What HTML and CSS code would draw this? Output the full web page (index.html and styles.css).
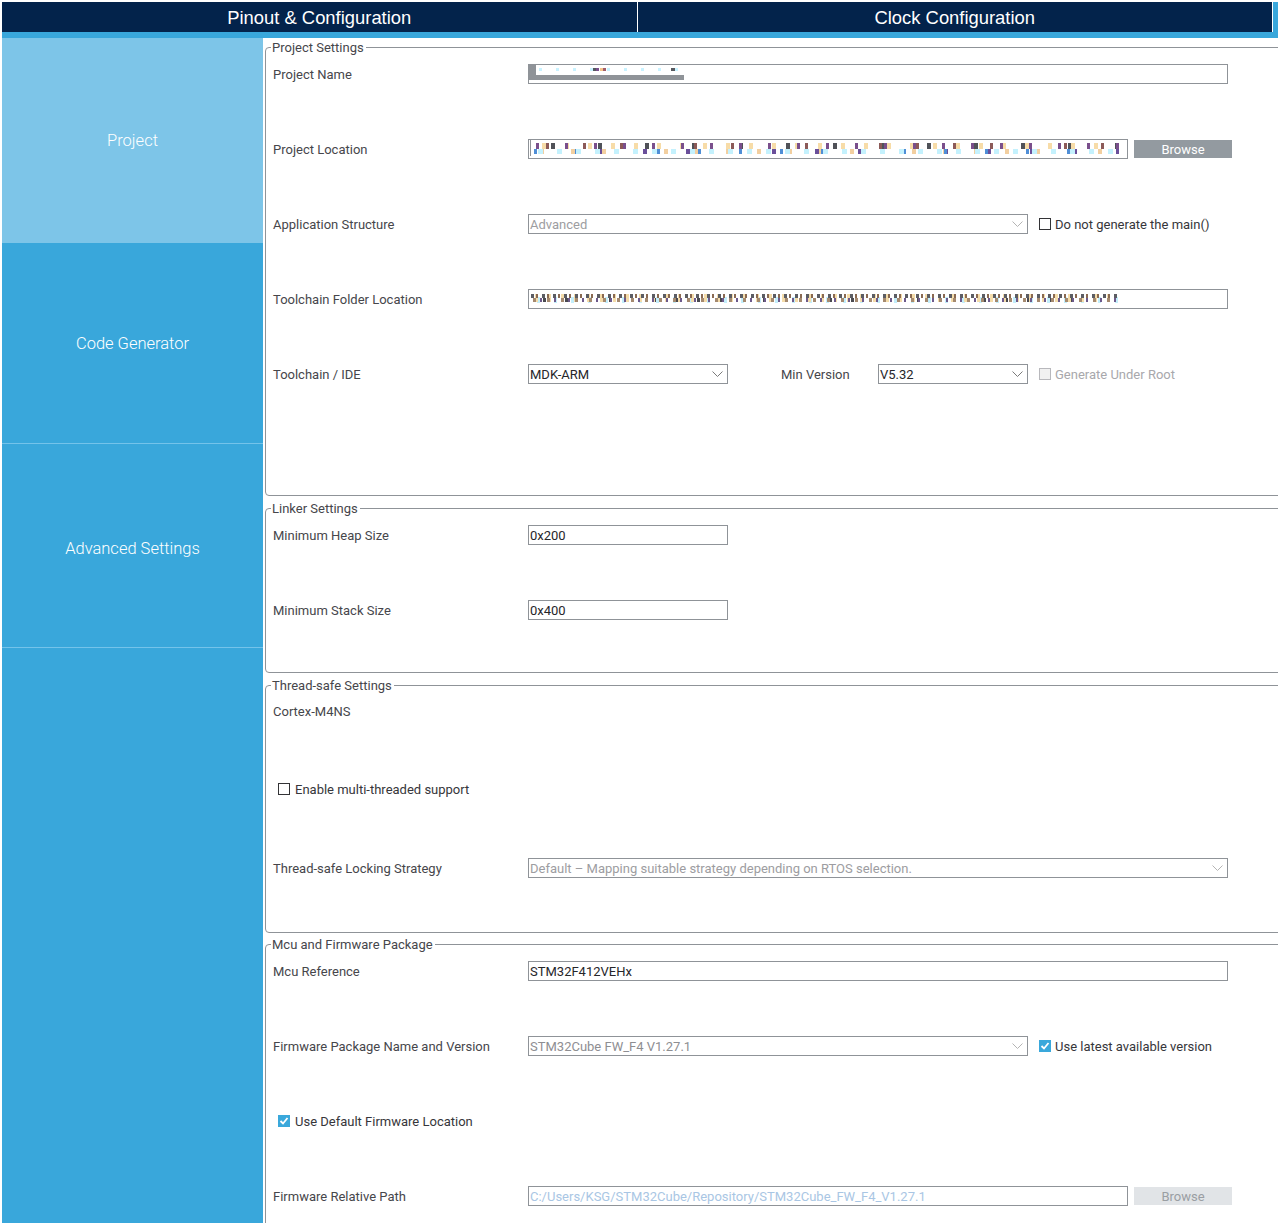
FILE: index.html
```html
<!DOCTYPE html>
<html lang="en">
<head>
<meta charset="utf-8">
<title>Project Manager</title>
<link rel="stylesheet" href="styles.css">
</head>
<body>
<div class="app">
  <header class="topbar">
    <div class="tab">Pinout &amp; Configuration</div>
    <div class="tab">Clock Configuration</div>
  </header>
  <div class="main">
    <nav class="sidebar">
      <div class="nav-item active nav-project">Project</div>
      <div class="nav-item nav-code">Code Generator</div>
      <div class="nav-item nav-adv">Advanced Settings</div>
    </nav>
    <div class="content">
      <fieldset class="group g-project">
        <legend>Project Settings</legend>
        <div class="row">
          <div class="lbl">Project Name</div>
          <div class="field w700 redacted-name"><span class="rname"></span></div>
        </div>
        <div class="row">
          <div class="lbl">Project Location</div>
          <div class="field w600"><span class="caret"></span><span class="noise noise-a"></span></div>
          <div class="btn">Browse</div>
        </div>
        <div class="row">
          <div class="lbl">Application Structure</div>
          <div class="field select w500 disabled">Advanced
            <svg class="chev" width="11" height="6" viewBox="0 0 11 6"><polyline points="0.5,0.5 5.5,5.5 10.5,0.5" fill="none" stroke="#b4b4b4" stroke-width="1"/></svg>
          </div>
          <div class="check"><span class="box"></span><span>Do not generate the main()</span></div>
        </div>
        <div class="row">
          <div class="lbl">Toolchain Folder Location</div>
          <div class="field w700"><span class="noise noise-b"></span></div>
        </div>
        <div class="row">
          <div class="lbl">Toolchain / IDE</div>
          <div class="field select w200">MDK-ARM
            <svg class="chev" width="11" height="6" viewBox="0 0 11 6"><polyline points="0.5,0.5 5.5,5.5 10.5,0.5" fill="none" stroke="#7a7a7a" stroke-width="1"/></svg>
          </div>
          <div class="minlbl">Min Version</div>
          <div class="field select w150">V5.32
            <svg class="chev" width="11" height="6" viewBox="0 0 11 6"><polyline points="0.5,0.5 5.5,5.5 10.5,0.5" fill="none" stroke="#7a7a7a" stroke-width="1"/></svg>
          </div>
          <div class="check off"><span class="box"></span><span>Generate Under Root</span></div>
        </div>
      </fieldset>

      <fieldset class="group g-linker">
        <legend>Linker Settings</legend>
        <div class="row">
          <div class="lbl">Minimum Heap Size</div>
          <div class="field w200">0x200</div>
        </div>
        <div class="row">
          <div class="lbl">Minimum Stack Size</div>
          <div class="field w200">0x400</div>
        </div>
      </fieldset>

      <fieldset class="group g-thread">
        <legend>Thread-safe Settings</legend>
        <div class="row row-core">
          <div class="lbl">Cortex-M4NS</div>
        </div>
        <div class="row row-multi">
          <div class="check indent"><span class="box"></span><span>Enable multi-threaded support</span></div>
        </div>
        <div class="row">
          <div class="lbl">Thread-safe Locking Strategy</div>
          <div class="field select w700 disabled">Default – Mapping suitable strategy depending on RTOS selection.
            <svg class="chev" width="11" height="6" viewBox="0 0 11 6"><polyline points="0.5,0.5 5.5,5.5 10.5,0.5" fill="none" stroke="#b4b4b4" stroke-width="1"/></svg>
          </div>
        </div>
      </fieldset>

      <fieldset class="group g-mcu">
        <legend>Mcu and Firmware Package</legend>
        <div class="row">
          <div class="lbl">Mcu Reference</div>
          <div class="field w700">STM32F412VEHx</div>
        </div>
        <div class="row">
          <div class="lbl">Firmware Package Name and Version</div>
          <div class="field select w500 disabled dim">STM32Cube FW_F4 V1.27.1
            <svg class="chev" width="11" height="6" viewBox="0 0 11 6"><polyline points="0.5,0.5 5.5,5.5 10.5,0.5" fill="none" stroke="#b4b4b4" stroke-width="1"/></svg>
          </div>
          <div class="check on"><span class="box"><svg width="12" height="12" viewBox="0 0 12 12"><polyline points="2.5,6 5,8.5 9.5,3" fill="none" stroke="#fff" stroke-width="1.8"/></svg></span><span>Use latest available version</span></div>
        </div>
        <div class="row">
          <div class="check on indent"><span class="box"><svg width="12" height="12" viewBox="0 0 12 12"><polyline points="2.5,6 5,8.5 9.5,3" fill="none" stroke="#fff" stroke-width="1.8"/></svg></span><span>Use Default Firmware Location</span></div>
        </div>
        <div class="row">
          <div class="lbl">Firmware Relative Path</div>
          <div class="field w600 path">C:/Users/KSG/STM32Cube/Repository/STM32Cube_FW_F4_V1.27.1</div>
          <div class="btn btn-off">Browse</div>
        </div>
      </fieldset>
    </div>
  </div>
</div>
</body>
</html>
```

FILE: styles.css
```css
html, body {
  margin: 0;
  padding: 0;
  background: #ffffff;
  overflow: hidden;
}

.app {
  width: 1278px;
  height: 1223px;
  box-sizing: border-box;
  padding: 2px 0 0 2px;
  display: flex;
  flex-direction: column;
  font-family: Roboto, "Liberation Sans", Arial, sans-serif;
  font-size: 13px;
  color: #46464b;
}

/* ---------- top bar ---------- */
.topbar {
  display: flex;
  flex: none;
  background: #39a7db;
  padding: 0 5px 6px 0;
}

.tab {
  flex: 1;
  height: 30px;
  line-height: 31px;
  background: #03234b;
  border-right: 1px solid #ffffff;
  color: #ffffff;
  text-align: center;
  font-family: "Liberation Sans", Arial, sans-serif;
  font-size: 18.4px;
}

/* ---------- main ---------- */
.main {
  flex: 1;
  display: flex;
  min-height: 0;
}

.sidebar {
  width: 261px;
  flex: none;
  background: #39a7db;
  display: flex;
  flex-direction: column;
}

.nav-item {
  display: flex;
  align-items: center;
  justify-content: center;
  color: #ffffff;
  font-size: 16.5px;
  font-weight: 300;
}

.nav-project {
  height: 205px;
  background: #7dc5e8;
}

.nav-code {
  height: 200px;
  border-bottom: 1px solid #74c3ea;
}

.nav-adv {
  height: 198px;
  padding-top: 5px;
  border-bottom: 1px solid #74c3ea;
}

.content {
  flex: 1;
  min-width: 0;
  padding-left: 2px;
  overflow: hidden;
}

/* ---------- groups ---------- */
.group {
  margin: 3px -30px 0 0;
  min-width: 0;
  border: 1px solid #8f9398;
  border-radius: 4px;
  padding: 8px 7px 0 7px;
}

.group legend {
  padding: 2px 2px 0 1px;
  margin-left: -2px;
  line-height: 16px;
  font-size: 13px;
  color: #46464b;
}

.g-project { margin-top: 0; padding-bottom: 111px; }
.g-linker { padding-bottom: 52px; }
.g-thread { padding-bottom: 54px; }
.g-mcu { margin-top: 2px; padding-bottom: 40px; }

.row {
  display: flex;
  align-items: center;
  height: 20px;
  margin-bottom: 55px;
}

.row:last-child { margin-bottom: 0; }

.row-core { height: 18px; margin-bottom: 59px; }
.row-multi { margin-bottom: 59px; }

.lbl {
  width: 255px;
  flex: none;
  white-space: nowrap;
}

/* ---------- fields ---------- */
.field {
  position: relative;
  box-sizing: border-box;
  height: 20px;
  line-height: 19px;
  border: 1px solid #8f9398;
  padding-left: 1px;
  color: #26262a;
  background: #ffffff;
  white-space: nowrap;
  overflow: hidden;
  flex: none;
}

.w700 { width: 700px; }
.w600 { width: 600px; }
.w500 { width: 500px; }
.w200 { width: 200px; }
.w150 { width: 150px; }

.field.disabled { color: #9d9da1; }
.field.dim { color: #8e8e92; }
.field.path { color: #a9c6e4; }

.chev {
  position: absolute;
  right: 4px;
  top: 6px;
}

.minlbl {
  width: 97px;
  flex: none;
  margin-left: 53px;
}

.btn {
  flex: none;
  width: 98px;
  height: 18px;
  line-height: 19px;
  margin-left: 6px;
  background: #939aa0;
  color: #ffffff;
  text-align: center;
}

.btn-off {
  background: #e1e4e7;
  color: #9a9ea3;
}

/* ---------- checkboxes ---------- */
.check {
  display: flex;
  align-items: center;
  margin-left: 11px;
  gap: 4px;
  white-space: nowrap;
  color: #36363a;
}

.check.indent { margin-left: 5px; gap: 5px; }

.check .box {
  width: 12px;
  height: 12px;
  box-sizing: border-box;
  border: 1px solid #333336;
  background: #ffffff;
  display: inline-flex;
  flex: none;
}

.check.off { color: #a8a8ac; }
.check.off .box { border-color: #b8b8bc; background: #f1f1f1; }

.check.on .box {
  border: none;
  background: #3aa8db;
}

/* ---------- redacted (pixelated) values ---------- */
.redacted-name { padding: 0; }

.rname {
  position: absolute;
  left: -1px;
  top: -1px;
  width: 156px;
  height: 16px;
  box-sizing: border-box;
  border-left: 8px solid #8f9398;
  border-bottom: 5px solid #8f9398;
  border-top: 1px solid #8f9398;
  background:
    repeating-linear-gradient(90deg, transparent 0 3px, #c9f2ff 3px 6px, transparent 6px 17px) 0 3px / 100% 3px no-repeat,
    repeating-linear-gradient(90deg, transparent 0 56px, #56585e 56px 60px, #7a4f8c 60px 63px, transparent 63px 79px) 0 3px / 100% 3px no-repeat,
    repeating-linear-gradient(90deg, transparent 0 64px, #f4c48c 64px 67px, #a15d6a 67px 70px, transparent 70px 88px) 0 3px / 100% 3px no-repeat,
    #ffffff;
}

.caret {
  display: inline-block;
  width: 1px;
  height: 16px;
  background: #8f9398;
  vertical-align: top;
}

.noise {
  display: inline-block;
  height: 12px;
  margin-top: 3px;
  vertical-align: top;
}

.noise-a {
  width: 588px;
  background:
    repeating-linear-gradient(90deg, transparent 0 5px, #7a4f8c 5px 8px, transparent 8px 29px) 0 0 / 100% 6px no-repeat,
    repeating-linear-gradient(90deg, transparent 0 11px, #f7dca8 11px 15px, transparent 15px 23px) 0 0 / 100% 6px no-repeat,
    repeating-linear-gradient(90deg, transparent 0 7px, #c4f1fd 7px 12px, transparent 12px 19px) 0 6px / 100% 5px no-repeat,
    repeating-linear-gradient(90deg, transparent 0 15px, #8c5a58 15px 18px, transparent 18px 37px) 0 0 / 100% 6px no-repeat,
    repeating-linear-gradient(90deg, transparent 0 3px, #4f8ed6 3px 6px, transparent 6px 41px) 0 6px / 100% 5px no-repeat,
    repeating-linear-gradient(90deg, transparent 0 20px, #505258 20px 24px, transparent 24px 47px) 0 0 / 100% 6px no-repeat,
    repeating-linear-gradient(90deg, transparent 0 9px, #f2cfa0 9px 13px, transparent 13px 31px) 0 6px / 100% 5px no-repeat,
    repeating-linear-gradient(90deg, transparent 0 26px, #6a4f9a 26px 30px, transparent 30px 43px) 0 6px / 100% 5px no-repeat;
}

.noise-b {
  width: 588px;
  margin-left: 1px;
  background:
    repeating-linear-gradient(90deg, #5c5d63 0 3px, transparent 3px 5px, #8a6a52 5px 7px, transparent 7px 11px) 0 1px / 100% 4px no-repeat,
    repeating-linear-gradient(90deg, transparent 0 2px, #a58a70 2px 5px, transparent 5px 9px, #6d5a8c 9px 11px, transparent 11px 14px) 0 5px / 100% 4px no-repeat,
    repeating-linear-gradient(90deg, transparent 0 4px, #f4dcaa 4px 7px, transparent 7px 13px) 0 1px / 100% 8px no-repeat,
    repeating-linear-gradient(90deg, transparent 0 6px, #c3eefb 6px 9px, transparent 9px 17px) 0 4px / 100% 6px no-repeat,
    repeating-linear-gradient(90deg, transparent 0 12px, #4a4a50 12px 15px, transparent 15px 22px) 0 5px / 100% 4px no-repeat;
}
```
